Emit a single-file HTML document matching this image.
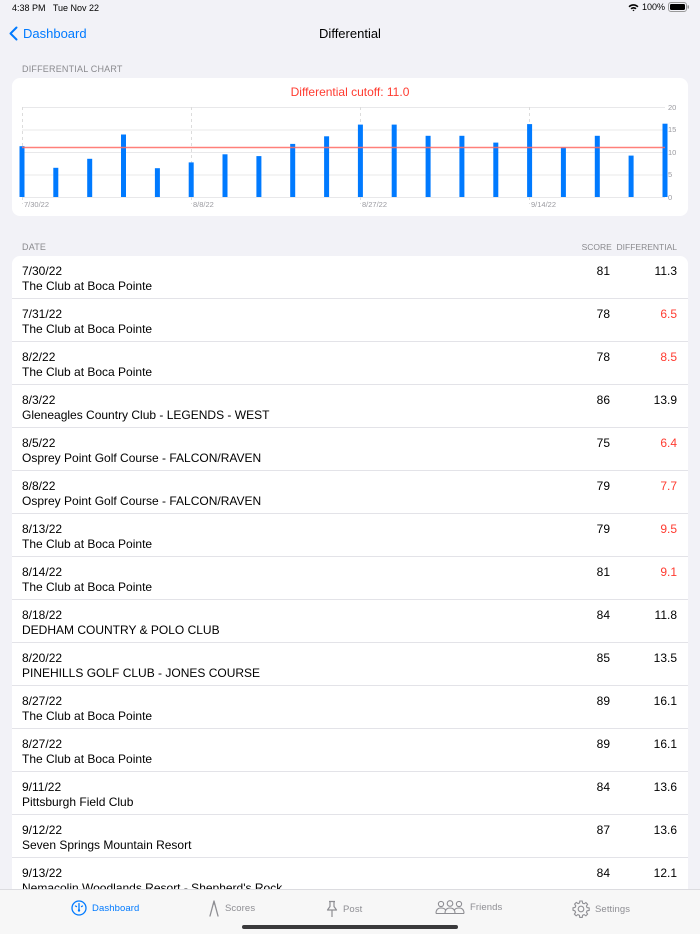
<!DOCTYPE html>
<html><head><meta charset="utf-8">
<style>
*{margin:0;padding:0;box-sizing:border-box}
body{width:700px;height:934px;overflow:hidden;background:#f2f2f7;font-family:"Liberation Sans",sans-serif;color:#000;position:relative}
.abs{position:absolute}
.sec{font-size:9px;color:#8a8a8e;letter-spacing:.2px}
.card{position:absolute;left:12px;right:12px;background:#fff}
.row{position:absolute;left:0;right:0;height:43px;border-bottom:1px solid #e3e3e8;font-size:12px}
.row .d{position:absolute;left:10px;top:8px}
.row .c{position:absolute;left:10px;top:23px}
.row .s{position:absolute;right:78px;top:8px}
.row .v{position:absolute;right:11px;top:8px}
.red{color:#ff3b30}
.tab{position:absolute;bottom:0;left:0;right:0;height:45px;background:#f7f7f7;border-top:1px solid #dcdce0}
.ti{position:absolute;top:10px;font-size:9.5px;color:#8e8e93;display:flex;align-items:center;gap:5px;letter-spacing:.1px}
</style></head><body>
<div class="abs" style="left:12px;top:3px;font-size:9px;">4:38 PM&nbsp;&nbsp; Tue Nov 22</div>
<div class="abs" style="right:10px;top:2px;font-size:9px;display:flex;align-items:center;gap:3px;">
<svg width="11" height="9" viewBox="0 0 11 9"><path d="M0.5 3.2A7 7 0 0 1 10.5 3.2L9.3 4.4A5.3 5.3 0 0 0 1.7 4.4Z M2.5 5.2A4.2 4.2 0 0 1 8.5 5.2L7.3 6.4A2.5 2.5 0 0 0 3.7 6.4Z M4.5 7.2A1.5 1.5 0 0 1 6.5 7.2L5.5 8.3Z" fill="#000"/></svg>100%
<svg width="22" height="10" viewBox="0 0 22 10"><rect x="0.5" y="0.5" width="18" height="9" rx="2.5" fill="none" stroke="#999"/><rect x="2" y="2" width="15" height="6" rx="1.2" fill="#000"/><rect x="19.5" y="3.3" width="1.5" height="3.4" rx=".7" fill="#999"/></svg></div>
<svg class="abs" style="left:9px;top:26px" width="9" height="15" viewBox="0 0 9 15"><path d="M7.5 1.5L1.5 7.5L7.5 13.5" fill="none" stroke="#007aff" stroke-width="2" stroke-linecap="round" stroke-linejoin="round"/></svg>
<div class="abs" style="left:23px;top:26px;font-size:13px;color:#007aff">Dashboard</div>
<div class="abs" style="left:0;right:0;top:26px;text-align:center;font-size:13px;">Differential</div>

<div class="abs sec" style="left:22px;top:64px">DIFFERENTIAL CHART</div>
<div class="card" style="top:78px;height:138px;border-radius:8px"></div>
<div class="abs" style="left:0;right:0;top:85px;text-align:center;font-size:12px;color:#ff3b30">Differential cutoff: 11.0</div>
<svg class="abs" style="left:0;top:0" width="700" height="230">
<g stroke="#e8e8ea" stroke-width="1">
<line x1="22" y1="107.5" x2="665" y2="107.5"/><line x1="22" y1="130" x2="665" y2="130"/><line x1="22" y1="152.5" x2="665" y2="152.5"/><line x1="22" y1="175" x2="665" y2="175"/><line x1="22" y1="197.5" x2="665" y2="197.5"/>
</g>
<g stroke="#dcdcdc" stroke-dasharray="3,3">
<line x1="22.5" y1="107" x2="22.5" y2="204"/><line x1="191.5" y1="107" x2="191.5" y2="204"/><line x1="360.5" y1="107" x2="360.5" y2="204"/><line x1="529.5" y1="107" x2="529.5" y2="204"/>
</g>
<g fill="#007aff">
<rect x="19.5" y="146.2" width="5" height="50.8"/>
<rect x="53.3" y="167.8" width="5" height="29.2"/>
<rect x="87.2" y="158.8" width="5" height="38.2"/>
<rect x="121" y="134.5" width="5" height="62.5"/>
<rect x="154.9" y="168.2" width="5" height="28.8"/>
<rect x="188.7" y="162.4" width="5" height="34.6"/>
<rect x="222.5" y="154.3" width="5" height="42.7"/>
<rect x="256.4" y="156.1" width="5" height="40.9"/>
<rect x="290.2" y="143.9" width="5" height="53.1"/>
<rect x="324.1" y="136.3" width="5" height="60.7"/>
<rect x="357.9" y="124.6" width="5" height="72.4"/>
<rect x="391.7" y="124.6" width="5" height="72.4"/>
<rect x="425.6" y="135.8" width="5" height="61.2"/>
<rect x="459.4" y="135.8" width="5" height="61.2"/>
<rect x="493.3" y="142.6" width="5" height="54.4"/>
<rect x="527.1" y="124.1" width="5" height="72.9"/>
<rect x="560.9" y="147.5" width="5" height="49.5"/>
<rect x="594.8" y="135.8" width="5" height="61.2"/>
<rect x="628.6" y="155.6" width="5" height="41.4"/>
<rect x="662.5" y="123.7" width="5" height="73.3"/>
</g>
<line x1="22" y1="147.5" x2="665" y2="147.5" stroke="#ff6b63" stroke-width="1.5" opacity=".85"/>
<g font-family="Liberation Sans" font-size="7.5" fill="#9a9aa0">
<text x="668" y="110">20</text><text x="668" y="132">15</text><text x="668" y="155">10</text><text x="668" y="177">5</text><text x="668" y="200">0</text>
<text x="24" y="207">7/30/22</text><text x="193" y="207">8/8/22</text><text x="362" y="207">8/27/22</text><text x="531" y="207">9/14/22</text>
</g>
</svg>

<div class="abs sec" style="left:22px;top:242px">DATE</div>
<div class="abs sec" style="right:23px;top:242px;font-size:8.5px;letter-spacing:0">SCORE&nbsp; DIFFERENTIAL</div>
<div class="card" style="top:256px;height:640px;border-radius:8px 8px 0 0;overflow:hidden">
<div class="row" style="top:0"><span class="d">7/30/22</span><span class="c">The Club at Boca Pointe</span><span class="s">81</span><span class="v">11.3</span></div>
<div class="row" style="top:43px"><span class="d">7/31/22</span><span class="c">The Club at Boca Pointe</span><span class="s">78</span><span class="v red">6.5</span></div>
<div class="row" style="top:86px"><span class="d">8/2/22</span><span class="c">The Club at Boca Pointe</span><span class="s">78</span><span class="v red">8.5</span></div>
<div class="row" style="top:129px"><span class="d">8/3/22</span><span class="c">Gleneagles Country Club - LEGENDS - WEST</span><span class="s">86</span><span class="v">13.9</span></div>
<div class="row" style="top:172px"><span class="d">8/5/22</span><span class="c">Osprey Point Golf Course - FALCON/RAVEN</span><span class="s">75</span><span class="v red">6.4</span></div>
<div class="row" style="top:215px"><span class="d">8/8/22</span><span class="c">Osprey Point Golf Course - FALCON/RAVEN</span><span class="s">79</span><span class="v red">7.7</span></div>
<div class="row" style="top:258px"><span class="d">8/13/22</span><span class="c">The Club at Boca Pointe</span><span class="s">79</span><span class="v red">9.5</span></div>
<div class="row" style="top:301px"><span class="d">8/14/22</span><span class="c">The Club at Boca Pointe</span><span class="s">81</span><span class="v red">9.1</span></div>
<div class="row" style="top:344px"><span class="d">8/18/22</span><span class="c">DEDHAM COUNTRY &amp; POLO CLUB</span><span class="s">84</span><span class="v">11.8</span></div>
<div class="row" style="top:387px"><span class="d">8/20/22</span><span class="c">PINEHILLS GOLF CLUB - JONES COURSE</span><span class="s">85</span><span class="v">13.5</span></div>
<div class="row" style="top:430px"><span class="d">8/27/22</span><span class="c">The Club at Boca Pointe</span><span class="s">89</span><span class="v">16.1</span></div>
<div class="row" style="top:473px"><span class="d">8/27/22</span><span class="c">The Club at Boca Pointe</span><span class="s">89</span><span class="v">16.1</span></div>
<div class="row" style="top:516px"><span class="d">9/11/22</span><span class="c">Pittsburgh Field Club</span><span class="s">84</span><span class="v">13.6</span></div>
<div class="row" style="top:559px"><span class="d">9/12/22</span><span class="c">Seven Springs Mountain Resort</span><span class="s">87</span><span class="v">13.6</span></div>
<div class="row" style="top:602px"><span class="d">9/13/22</span><span class="c">Nemacolin Woodlands Resort - Shepherd's Rock</span><span class="s">84</span><span class="v">12.1</span></div>
</div>

<div class="tab">
<div class="ti" style="left:71px;color:#007aff"><svg width="16" height="16" viewBox="0 0 16 16"><circle cx="8" cy="8" r="7" fill="none" stroke="#007aff" stroke-width="1.3"/><path d="M8 4v6M4.5 6l1 .6M11.5 6l-1 .6M8 3.5v1" stroke="#007aff" stroke-width="1.3" stroke-linecap="round"/><circle cx="8" cy="10.5" r="1.2" fill="#007aff"/></svg>Dashboard</div>
<div class="ti" style="left:208px"><svg width="12" height="17" viewBox="0 0 12 17"><path d="M6 1L2 16M6 1l4 15M6 1v3" stroke="#8e8e93" stroke-width="1.3" fill="none" stroke-linecap="round"/></svg>Scores</div>
<div class="ti" style="left:326px"><svg width="12" height="18" viewBox="0 0 12 18"><path d="M3 1.5h6M4 1.5v5L1.5 10h9L8 6.5v-5M6 10v7" stroke="#8e8e93" stroke-width="1.2" fill="none" stroke-linejoin="round"/></svg>Post</div>
<div class="ti" style="left:435px"><svg width="30" height="14" viewBox="0 0 30 14"><g fill="none" stroke="#8e8e93" stroke-width="1.1"><circle cx="6" cy="4" r="2.6"/><circle cx="15" cy="3.5" r="2.8"/><circle cx="24" cy="4" r="2.6"/><path d="M1 13.5c0-4 2-5.5 5-5.5s4 1 4.5 2M10 13.5c0-4 2-5.5 5-5.5s5 1.5 5 5.5M19.5 10c.5-1 1.5-2 4.5-2s5 1.5 5 5.5M1 13.5h28"/></g></svg>Friends</div>
<div class="ti" style="left:572px"><svg width="18" height="18" viewBox="0 0 18 18"><g fill="none" stroke="#8e8e93" stroke-width="1.1"><circle cx="9" cy="9" r="2.8"/><path d="M7.8 1h2.4l.4 2.1 1.5.7 1.8-1.2 1.700 1.7-1.2 1.8.7 1.5 2.1.4v2.4l-2.1.4-.7 1.5 1.2 1.8-1.7 1.7-1.8-1.2-1.5.7-.4 2.1H7.8l-.4-2.1-1.5-.7-1.8 1.2-1.7-1.7 1.2-1.8-.7-1.5L1 10.2V7.8l2.1-.4.7-1.5-1.2-1.8 1.7-1.7 1.8 1.2 1.5-.7z"/></g></svg>Settings</div>
<div class="abs" style="left:242px;top:35px;width:216px;height:4px;border-radius:2px;background:#3a3a3c"></div>
</div>
</body></html>
